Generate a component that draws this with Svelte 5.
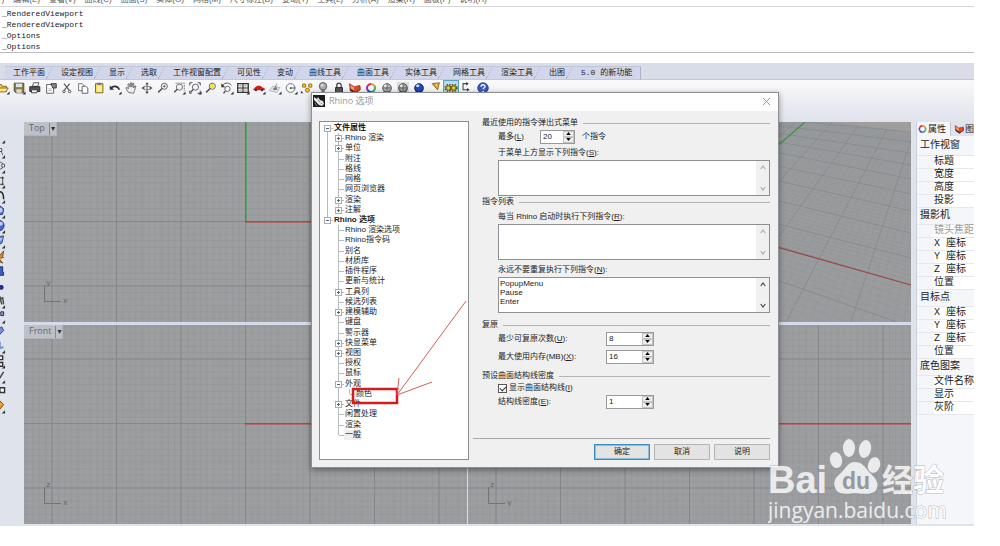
<script lang="ts">
  interface TreeRow {
    text: string
    level: number
    open?: boolean
    closed?: boolean
    last?: boolean
    current?: boolean
  }

  const menus = ['文件(F)', '编辑(E)', '查看(V)', '曲线(C)', '曲面(S)', '实体(O)', '网格(M)', '尺寸标注(D)', '变动(T)', '工具(L)', '分析(A)', '渲染(R)', '面板(P)', '说明(H)']
  const history = ['_RenderedViewport', '_RenderedViewport', '_Options', '_Options']
  const tabs = ['工作平面', '设定视图', '显示', '选取', '工作视窗配置', '可见性', '变动', '曲线工具', '曲面工具', '实体工具', '网格工具', '渲染工具', '出图', '5.0 的新功能']

  const wheel = '<g fill="none" stroke-width="2.4"><path d="M8 3.4a4.6 4.6 0 0 1 4 2.3" stroke="#e8a020"/><path d="M12 5.7a4.6 4.6 0 0 1 0 4.6" stroke="#58b030"/><path d="M12 10.3a4.6 4.6 0 0 1-4 2.3" stroke="#20a0a8"/><path d="M8 12.6a4.6 4.6 0 0 1-4-2.3" stroke="#2848c8"/><path d="M4 10.3a4.6 4.6 0 0 1 0-4.6" stroke="#9030b0"/><path d="M4 5.7a4.6 4.6 0 0 1 4-2.3" stroke="#d82828"/></g>'
  const layers = '<path d="M2 8v3l6 4 6-5V6z" fill="#2d3561"/><path d="M1.500 3l5.500 3.500 6.500-1.500.5 5-5.500 3-6-4z" fill="#e04a20" stroke="#7a1c10" stroke-width=".7"/><path d="M2.500 4.500l4.500 2.800v3.500l-3.500-2z" fill="#f79a6a"/>'
  const lens = '<circle cx="9.500" cy="6" r="3.500" fill="#f4f6f8" stroke="#555"/><path d="M7 8.500L2.500 13" stroke="#555" stroke-width="1.800"/>'
  const more = '<path d="M15.500 12v3.500H12z" fill="#333"/>'
  const ball = (c: string, d: string) =>
    `<circle cx="8" cy="8" r="5" fill="${c}" stroke="${d}"/><ellipse cx="6.500" cy="5.500" rx="2" ry="1.500" fill="#fff" opacity=".8"/><path d="M4 11a5 5 0 0 0 8.500-1" stroke="${d}" fill="none" stroke-width="1.500"/>`

  const tools: { name: string; art: string; on?: boolean }[] = [
    { name: '打开', art: '<path d="M1 4h5l1 2h5v6H2z" fill="#f2cc50" stroke="#806010"/><path d="M4 8h10l-3 4.500H2z" fill="#ffe38a" stroke="#806010"/>' + more },
    { name: '保存', art: '<path d="M2.500 2.500h11v11h-9l-2-2z" fill="#8c7c38" stroke="#4c4630"/><path d="M4.500 3h7v4h-7z" fill="#d8e4f0"/><path d="M5 9.500h6v4H5z" fill="#ddd"/>' + more },
    { name: '打印', art: '<path d="M5 6l1.500-4h6L11 6z" fill="#fff" stroke="#444"/><path d="M2 6.500h11.500V12H2z" fill="#555" stroke="#222"/><path d="M4 10h7l-1 3.500H4z" fill="#eee" stroke="#333"/>' },
    { name: '文件属性', art: '<path d="M3 4h8v10H3z" fill="#fff" stroke="#555"/><path d="M8 3h6v5h-4z" fill="#888" stroke="#333"/><path d="M5 9h4M5 11h4" stroke="#aaa"/>' },
    { name: '剪切', art: '<path d="M4.500 3l6 7.500M11 3l-6 7.500" stroke="#555" stroke-width="1.200"/><circle cx="4.500" cy="12" r="1.400" fill="none" stroke="#444"/><circle cx="11" cy="12" r="1.400" fill="none" stroke="#444"/>' },
    { name: '复制', art: '<path d="M3 3h4l2 2v6H3z" fill="#fff" stroke="#666"/><path d="M7 6h4l2.500 2v6H7z" fill="#fff" stroke="#555"/>' },
    { name: '粘贴', art: '<path d="M4 3h8.500v10.500H4z" fill="#f5de58" stroke="#6d6020"/><path d="M6 2h4.500v2.500H6z" fill="#777"/><path d="M6 6h5v6H6z" fill="#fbf0a0"/>' },
    { name: '复原', art: '<path d="M3 9c2-4 8-4 10 1" fill="none" stroke="#333" stroke-width="1.800"/><path d="M2 5v5h5z" fill="#333"/>' + more },
    { name: '平移', art: '<path d="M5 13l-3-5 1-1 2 2-.5-5.500 1.400-.2L7 7l.3-5h1.400l.3 5 1-4.500 1.300.3L11 8l1.500-2.500 1.200.6L12 11l-1 3z" fill="#eee" stroke="#555" stroke-width=".9"/>' },
    { name: '旋转视图', art: '<ellipse cx="8" cy="8" rx="5" ry="2" fill="none" stroke="#888"/><path d="M8 3v10" stroke="#555"/><path d="M8 1l2 3H6zM8 15l2-3H6zM1.500 8L5 6v4zM14.500 8L11 6v4z" fill="#555"/>' },
    { name: '缩放', art: lens + '<path d="M8 6h3M9.500 4.500v3" stroke="#555"/>' },
    { name: '框选缩放', art: '<path d="M4 2.500h10v9" fill="none" stroke="#666" stroke-dasharray="2 1"/><circle cx="8.500" cy="7" r="3.500" fill="#eef" stroke="#666"/><path d="M6 9.500L2.500 13" stroke="#444" stroke-width="1.600"/>' + more },
    { name: '缩放至最大范围', art: '<circle cx="8.500" cy="7" r="3.500" fill="none" stroke="#555"/><path d="M6 9.500L3 13" stroke="#444" stroke-width="1.500"/><path d="M2 5V2h3M11 2h3v3M14 11v3h-3M2 11v3h2" fill="none" stroke="#333"/>' + more },
    { name: '缩放至选取物件', art: lens + '<circle cx="9.500" cy="6" r="2.500" fill="#ffe030"/>' },
    { name: '复原视图', art: '<circle cx="8.500" cy="9" r="3" fill="none" stroke="#555"/><path d="M6 11.500L4 14" stroke="#444" stroke-width="1.500"/><path d="M3 5c3-4 8-3 10 0" fill="none" stroke="#333"/><path d="M1.500 2.500V7H6z" fill="#333"/>' + more },
    { name: '四个视窗', art: '<path d="M2 3h12v10H2z" fill="#f4f4f4" stroke="#333" stroke-width="1.500"/><path d="M8 3v10M2 8h12" stroke="#333" stroke-width="1.300"/><path d="M4 5.500h2.500M9.500 5.500H12M4 10.500h2.500M9.500 10.500H12" stroke="#888"/>' + more },
    { name: '右视图', art: '<path d="M1.500 9l2-1.500L6 5.500h3.500L12 7.500l2.500.8v2.200h-13z" fill="#cf2020"/><circle cx="4.500" cy="10.500" r="1.300" fill="#333"/><circle cx="11.500" cy="10.500" r="1.300" fill="#333"/>' + more },
    { name: '工作平面', art: '<path d="M1.500 11l4-5 8 1.500L10 13z" fill="#e8eaec" stroke="#aaa"/><path d="M5 9.500l4-3 2 3-3 1z" fill="#777"/><path d="M8 8l2-5" stroke="#5a9c50"/>' + more },
    { name: '物件锁点', art: '<circle cx="7.500" cy="8" r="5" fill="none" stroke="#666"/><path d="M8 8h5" stroke="#444"/><circle cx="7.500" cy="8" r="1" fill="#444"/>' + more },
    { name: '选取', art: '<path d="M3 3.500h3.500V7H3z" fill="#f2c830" stroke="#8a6c10"/><path d="M10 3.500h3.500V7H10z" fill="#f2c830" stroke="#8a6c10"/><circle cx="8.500" cy="10.500" r="2.300" fill="#f2c830" stroke="#8a6c10"/><path d="M1 11v3h3z" fill="#333"/>' + more },
    { name: '隐藏物件', art: '<circle cx="8" cy="6" r="4.300" fill="#a8aaac" stroke="#555"/><path d="M6 10h4v4H6z" fill="#777"/><circle cx="7" cy="5" r="1.500" fill="#ddd"/>' },
    { name: '锁定物件', art: '<path d="M5.500 8V5a2.500 2.500 0 0 1 5 0v3" fill="none" stroke="#444" stroke-width="1.500"/><path d="M4 7.500h8V14H4z" fill="#555" stroke="#222"/>' },
    { name: '图层', art: layers },
    { name: '物件属性', art: wheel },
    { name: '着色', art: ball('#aeb0b2', '#555') + '<path d="M8 3v10M3 8h10" stroke="#555" stroke-width=".8"/>' },
    { name: '着色模式', art: '<path d="M1 1h14v14H1z" fill="#dcdcdc"/>' + ball('#9c9ea0', '#444') + '<path d="M8 3v10M3 8h10" stroke="#555" stroke-width=".8"/>' },
    { name: '渲染', art: ball('#2048b8', '#102468') },
    { name: '聚光灯', art: '<path d="M5 3l8-1-2 8z" fill="#f0b840" stroke="#7a5c20"/><path d="M5 3l6 7" stroke="#a07018"/>' },
    { name: '选项', on: true, art: '<g fill="none" stroke="#5c5210" stroke-width="2.200" stroke-dasharray="1.600 1.300"><circle cx="5" cy="8" r="3.600"/><circle cx="11" cy="8" r="3.600"/></g><circle cx="5" cy="8" r="2.500" fill="#e0cc40" stroke="#6a5c10"/><circle cx="11" cy="8" r="2.500" fill="#e0cc40" stroke="#6a5c10"/>' },
    { name: '尺寸标注', art: '<path d="M8 3H3.500v7H9" fill="none" stroke="#444" stroke-width="1.200"/><path d="M7 1l3 2-3 2zM8 8l3 2-3 2z" fill="#333"/>' + more },
    { name: '说明', art: '<circle cx="8" cy="8" r="6" fill="#3558c4" stroke="#22388c"/><path d="M5.800 6.500c0-3 4.500-2.800 4.500-.3 0 1.600-2.100 1.500-2.100 3.300M8.200 11v1.500" fill="none" stroke="#fff" stroke-width="1.500"/>' },
  ]

  const sideTools = [
    more,
    '<path d="M3 2l8 4 2 6" fill="none" stroke="#666"/><path d="M9 5h3v3H9z" fill="#fff" stroke="#444"/>' + more,
    '<ellipse cx="8" cy="7" rx="6" ry="4" fill="none" stroke="#555"/><path d="M12 5.500h3v3h-3z" fill="#fff" stroke="#555"/>' + more,
    '<path d="M2 4h11v7H2z" fill="none" stroke="#444"/><path d="M12 3h2v2h-2zM12 10h2v2h-2z" fill="#444"/>' + more,
    '<path d="M3 3h7c3 0 4 4 4 8" fill="none" stroke="#222" stroke-width="1.500"/>' + more,
    '<path d="M2 5l8-3 4 3-1 6-8 1z" fill="#5878d8" stroke="#283c80"/><path d="M6 6l6-2 1 4-6 2z" fill="#c4d4fa"/>' + more,
    '<circle cx="9" cy="7" r="5.500" fill="#4468d8" stroke="#203478"/><circle cx="11" cy="5" r="2" fill="#c8d8ff"/>' + more,
    '<path d="M2 4l12-2-2 8-8 2z" fill="#6c8cd8" stroke="#304884"/><path d="M5 5l8-1-1 3-6 1z" fill="#a8c0f0"/>' + more,
    '<path d="M3 8h6l5-6-1 6 1 1-5 1 4 5-7-3z" fill="#e8902c" stroke="#7c4410"/>',
    '<path d="M6 9h3V3h4v6h1v3H6z" fill="#3460c0" stroke="#1c2c60"/>',
    '<circle cx="11.500" cy="9" r="2.500" fill="#2020a0"/><path d="M4 4l7 5-3 4" stroke="#444" fill="none"/>',
    '<path d="M4 3h6l2 8M9 6l4-2 1 7" fill="none" stroke="#444" stroke-width="1.500"/>' + more,
    '<path d="M11 3h3v4h-3z" fill="#8ca4e8" stroke="#223"/><path d="M2 4h7v8" fill="none" stroke="#222" stroke-width="1.500"/>' + more,
    '<path d="M5 8l7-5 2 4-6 6z" fill="#7890e0" stroke="#303c90"/>',
    '<path d="M4 9h10M10 3v8" stroke="#7890d0" stroke-width="2"/>' + more,
    '<path d="M9 2h4v4H9zM9 9h4v4H9z" fill="#eee" stroke="#333" stroke-width="1.500"/>' + more,
    '<path d="M6 8l3 3 5-8" fill="none" stroke="#444" stroke-width="1.500"/>' + more,
    '<path d="M10 4h5v5h-5z" fill="#fff" stroke="#333" stroke-width="1.500"/><path d="M5 6h5" stroke="#333" stroke-width="1.500"/>',
    '<path d="M9 1l5 5-5 6-5-6z" fill="#e8a030" stroke="#704c10"/>' + more,
  ]

  const tree: TreeRow[] = [
    { text: '文件属性', level: 0, open: true },
    { text: 'Rhino 渲染', level: 1, closed: true },
    { text: '单位', level: 1, closed: true },
    { text: '附注', level: 1 },
    { text: '格线', level: 1 },
    { text: '网格', level: 1 },
    { text: '网页浏览器', level: 1 },
    { text: '渲染', level: 1, closed: true },
    { text: '注解', level: 1, closed: true, last: true },
    { text: 'Rhino 选项', level: 0, open: true, last: true },
    { text: 'Rhino 渲染选项', level: 1 },
    { text: 'Rhino指令码', level: 1 },
    { text: '别名', level: 1 },
    { text: '材质库', level: 1 },
    { text: '插件程序', level: 1 },
    { text: '更新与统计', level: 1 },
    { text: '工具列', level: 1, closed: true },
    { text: '候选列表', level: 1 },
    { text: '建模辅助', level: 1, closed: true },
    { text: '键盘', level: 1 },
    { text: '警示器', level: 1 },
    { text: '快显菜单', level: 1, closed: true },
    { text: '视图', level: 1, closed: true },
    { text: '授权', level: 1 },
    { text: '鼠标', level: 1 },
    { text: '外观', level: 1, open: true },
    { text: '颜色', level: 2, last: true },
    { text: '文件', level: 1, closed: true },
    { text: '闲置处理', level: 1 },
    { text: '渲染', level: 1 },
    { text: '一般', level: 1, last: true, current: true },
  ]

  const properties = [
    { title: '工作视窗', rows: ['标题', '宽度', '高度', '投影'] },
    { title: '摄影机', rows: ['镜头焦距', 'X 座标', 'Y 座标', 'Z 座标', '位置'] },
    { title: '目标点', rows: ['X 座标', 'Y 座标', 'Z 座标', '位置'] },
    { title: '底色图案', rows: ['文件名称', '显示', '灰阶'] },
  ]

  // perspective grid: each line as [x1, y1, x2, y2]
  const across = [
    [200, -13, 443, 10], [200, -10, 443, 20], [200, -5, 443, 31], [200, 1, 443, 43], [200, 9, 443, 57],
    [200, 21, 443, 72], [200, 34, 443, 89], [200, 52, 443, 111], [200, 74, 443, 136], [200, 92, 443, 163],
    [200, 120, 443, 205], [200, 158, 443, 262], [200, 205, 443, 330],
  ]
  const along = [
    [337, -8, 270, 50], [366, -2, 300, 72], [392, 1, 270, 172], [420, 5, 318, 200], [443, 18, 379, 212],
    [470, 30, 443, 220],
  ]
  function between(lines: number[][]) {
    return lines.slice(1).flatMap((b, i) =>
      [1, 2, 3, 4, 5].map(n => b.map((v, k) => lines[i][k] + ((v - lines[i][k]) * n) / 6)))
  }
  const fine = [...between(across), ...between(along)]

  let popupCount = $state(20)
  let undoSteps = $state(8)
  let memory = $state(16)
  let density = $state(1)
  let showIso = $state(true)
  let popupList = $state('')
  let startup = $state('')
  let never = $state('PopupMenu\nPause\nEnter')
</script>

{#snippet key(k: string)}
  <span>(<u>{k}</u>)</span>
{/snippet}

{#snippet spinner(id: string, value: number, set: (v: number) => void, wide: boolean)}
  <span class="spinner" class:wide>
    <input {id} type="number" {value} oninput={(e) => set(+e.currentTarget.value)} />
    <span class="steps">
      <button aria-label="增加" onclick={() => set(value + 1)}><svg viewBox="0 0 6 4"><path d="M0 4l3-4 3 4z" /></svg></button>
      <button aria-label="减少" onclick={() => set(value - 1)}><svg viewBox="0 0 6 4"><path d="M0 0l3 4 3-4z" /></svg></button>
    </span>
  </span>
{/snippet}

{#snippet scroller(dim: boolean)}
  <span class="scroller" class:dim>
    <svg viewBox="0 0 8 6"><path d="M1 5l3-4 3 4" /></svg>
    <svg viewBox="0 0 8 6"><path d="M1 1l3 4 3-4" /></svg>
  </span>
{/snippet}

{#snippet viewport(name: string, kind: string, up: string, right: string, ox: number, oy: number)}
  <section class="viewport">
    <svg class="grid" aria-hidden="true">
      <defs>
        <pattern id="minor-{kind}" width="6.450" height="6.450" patternUnits="userSpaceOnUse" x={ox} y={oy}>
          <path d="M.5 0v6.450M0 .5h6.450" stroke="#93959a" stroke-width=".6" fill="none" />
        </pattern>
        <pattern id="major-{kind}" width="64.500" height="64.500" patternUnits="userSpaceOnUse" x={ox} y={oy}>
          <path d="M.5 0v64.500M0 .5h64.500" stroke="#85888b" fill="none" />
        </pattern>
      </defs>
      <rect width="100%" height="100%" fill="url(#minor-{kind})" />
      <rect width="100%" height="100%" fill="url(#major-{kind})" />
      {#if kind === 'top'}
        <rect x={ox} y="0" width="1.500" height={oy} fill="#1fa636" />
      {/if}
      <rect x={kind === 'right' ? 0 : ox} y={oy} width="100%" height="1.500" fill="#c43c3c" />
    </svg>
    <button class="vp-name">{name}<i>▾</i></button>
    <svg class="axes" viewBox="0 0 30 26" aria-hidden="true">
      <path d="M3.500 7v16.500H20" fill="none" stroke="#70757a" />
      <text x="5" y="7">{up}</text>
      <text x="22" y="25">{right}</text>
    </svg>
  </section>
{/snippet}

<div class="page">
  <div class="app">
    <nav class="menus">
      {#each menus as menu}
        <a href="#menu">{menu}</a>
      {/each}
    </nav>

    <div class="history">
      {#each history as line}
        <div>{line}</div>
      {/each}
    </div>
    <input class="prompt" aria-label="指令" />

    <div class="tabs">
      {#each tabs as tab}
        <button>{tab}</button>
      {/each}
    </div>

    <div class="tools">
      {#each tools as tool}
        <button class:on={tool.on} aria-label={tool.name}>
          <svg viewBox="0 0 16 16">{@html tool.art}</svg>
        </button>
      {/each}
    </div>

    <div class="workspace">
      <div class="side">
        {#each sideTools as art, i}
          <button aria-label="工具 {i + 1}"><svg viewBox="0 0 16 16">{@html art}</svg></button>
        {/each}
      </div>

      <div class="viewports">
        {@render viewport('Top', 'top', 'y', 'x', 221, 99)}
        <section class="viewport">
          <svg class="grid" viewBox="0 0 443 200" preserveAspectRatio="xMaxYMin slice" aria-hidden="true">
            <path d="M0 0H443V200H0z" fill="#999b9d" />
            {#each fine as [x1, y1, x2, y2]}
              <line {x1} {y1} {x2} {y2} stroke="#919498" stroke-width=".4" />
            {/each}
            {#each [...across, ...along] as [x1, y1, x2, y2]}
              <line {x1} {y1} {x2} {y2} stroke="#85888b" stroke-width=".8" />
            {/each}
            <path d="M366 0L443 10V0z" fill="#a09e9c" />
            <path d="M270 58L337 0" stroke="#3a9440" stroke-width="1.200" />
            <path d="M270 114L443 163" stroke="#9c4646" stroke-width="1.200" />
          </svg>
        </section>
        {@render viewport('Front', 'front', 'z', 'x', 221, 98)}
        {@render viewport('Right', 'right', 'z', 'y', 221, 98)}
      </div>

      <aside>
        <div class="panel-tabs">
          <button class="active"><svg viewBox="0 0 16 16">{@html wheel}</svg>属性</button>
          <button><svg viewBox="0 0 16 16">{@html layers}</svg>图层</button>
        </div>
        <table>
          <tbody>
            {#each properties as group}
              <tr class="head"><th colspan="2">{group.title}</th></tr>
              {#each group.rows as row}
                <tr><td class="gutter"></td><td class:off={row === '镜头焦距'}>{row}</td></tr>
              {/each}
            {/each}
          </tbody>
        </table>
      </aside>
    </div>
  </div>

  <div class="dialog" role="dialog" aria-labelledby="dialog-title">
    <header>
      <svg class="logo" viewBox="0 0 12 12" aria-hidden="true">
        <path d="M0 0h12v12H0z" fill="#1c1c1c" />
        <path d="M1 2l3 2 1-2 2 3 3 1 1 3-2 2-3-1-3-3-2-2z" fill="#e4e4e4" />
        <path d="M5 5l2 2M8 8l1 1M2 8l2 3" stroke="#888" />
      </svg>
      <h1 id="dialog-title">Rhino 选项</h1>
      <button class="close" aria-label="关闭"><svg viewBox="0 0 8 8"><path d="M0 0l8 8M8 0L0 8" /></svg></button>
    </header>

    <div class="body">
      <ul class="tree">
        {#each tree as row, i}
          <li class:root={row.level === 0}>
            {#if row.level > 0}
              <span class="cell" class:through={i < 9}></span>
            {/if}
            {#if row.level > 1}
              <span class="cell through"></span>
            {/if}
            <span
              class="cell tee"
              class:through={row.level > 0 && !row.last}
              class:half={row.level > 0 && row.last}
              class:below={i === 0}
              class:above={i === 9}
            >
              {#if row.open || row.closed}
                <span class="toggle" class:plus={row.closed}></span>
              {/if}
            </span>
            <span class="name" class:current={row.current}>{row.text}</span>
          </li>
        {/each}
      </ul>

      <div class="pane">
        <h2>最近使用的指令弹出式菜单</h2>
        <div class="row">
          <label class="short" for="popup-count">最多{@render key('L')}</label>
          {@render spinner('popup-count', popupCount, v => popupCount = v, false)}
          <span>个指令</span>
        </div>
        <label class="above-box" for="popup-list">于菜单上方显示下列指令{@render key('S')}:</label>
        <div class="box"><textarea id="popup-list" bind:value={popupList}></textarea>{@render scroller(true)}</div>

        <h2>指令列表</h2>
        <label class="above-box" for="startup">每当 Rhino 启动时执行下列指令{@render key('R')}:</label>
        <div class="box"><textarea id="startup" bind:value={startup}></textarea>{@render scroller(true)}</div>
        <label class="above-box second" for="never">永远不要重复执行下列指令{@render key('N')}:</label>
        <div class="box"><textarea id="never" bind:value={never}></textarea>{@render scroller(false)}</div>

        <h2 class="spaced">复原</h2>
        <div class="row">
          <label for="undo">最少可复原次数{@render key('U')}:</label>
          {@render spinner('undo', undoSteps, v => undoSteps = v, true)}
        </div>
        <div class="row next">
          <label for="memory">最大使用内存(MB){@render key('X')}:</label>
          {@render spinner('memory', memory, v => memory = v, true)}
        </div>

        <h2 class="spaced">预设曲面结构线密度</h2>
        <label class="check"><input type="checkbox" bind:checked={showIso} />显示曲面结构线{@render key('I')}</label>
        <div class="row">
          <label for="density">结构线密度{@render key('E')}:</label>
          {@render spinner('density', density, v => density = v, true)}
        </div>

        <footer>
          <button class="default">确定</button>
          <button>取消</button>
          <button>说明</button>
        </footer>
      </div>
    </div>
  </div>

  <svg class="callout" viewBox="0 0 116 108" aria-hidden="true">
    <path d="M2 89h44v14H2z" fill="none" stroke="#d41c1c" stroke-width="2.500" />
    <path d="M115 1L46 95L48 78M46 95L81 82" fill="none" stroke="#d06060" />
  </svg>

  <svg class="watermark" viewBox="0 0 180 90" aria-hidden="true">
    <g class="ink">
      <text class="bai" x="0" y="55">Bai</text>
      <ellipse cx="68" cy="22" rx="6" ry="8" transform="rotate(-12 68 22)" />
      <ellipse cx="81" cy="10" rx="6" ry="9" />
      <ellipse cx="97" cy="11" rx="6" ry="9" transform="rotate(12 97 11)" />
      <ellipse cx="106" cy="27" rx="6" ry="8" transform="rotate(18 106 27)" />
      <path d="M87 24c-7 0-9 6-14 11-5 4-8 8-6 14 2 8 10 7 20 6 10 1 20 2 22-5 2-7-3-11-8-16-4-5-7-10-14-10z" />
      <text class="jy" x="114" y="53">经验</text>
      <text class="url" x="0" y="80">jingyan.baidu.com</text>
    </g>
    <text class="du" x="74" y="51">du</text>
  </svg>
</div>

<style>
  :global(body) {
    background: #fff;
  }

  .page {
    position: relative;
    overflow: hidden;
    padding-right: 26px;
    font: 8px/12px "Liberation Sans", "Noto Sans CJK SC", sans-serif;
    color: #222;
  }

  .page * {
    box-sizing: border-box;
  }

  button,
  input,
  textarea {
    font: inherit;
    color: inherit;
    margin: 0;
    padding: 0;
    border: 0;
    background: none;
  }

  svg {
    display: block;
  }

  .app {
    background: #dfe3ec;
  }

  .menus {
    display: flex;
    align-items: flex-end;
    gap: 9px;
    height: 7px;
    margin-left: -22px;
    overflow: hidden;
    background: #fff;
    border-bottom: 1px solid #d4d8dd;
  }

  .menus a {
    color: #555;
    text-decoration: none;
    white-space: nowrap;
  }

  .history {
    padding: 1px 2px 0;
    background: #fff;
    border-bottom: 1px solid #b9bcc0;
    font: 8px/11px "Liberation Mono", monospace;
  }

  .prompt {
    display: block;
    width: 100%;
    height: 10px;
    background: #fff;
  }

  .tabs {
    display: flex;
    height: 17px;
    padding: 3px 0 0 5px;
    background: #d9dde8;
    border-bottom: 1px solid #c3c8d6;
  }

  .tabs button {
    padding: 0 8px;
    white-space: nowrap;
    font-family: "Liberation Mono", "Noto Sans CJK SC", monospace;
    background:
      linear-gradient(118deg, transparent 49%, #abb2c8 49%, #abb2c8 53%, transparent 53%) right / 8px 100% no-repeat,
      #d1d6ea;
    border-top: 1px solid #c0c6d8;
  }

  .tabs button:last-child {
    background: #d1d6ea;
    border-right: 1px solid #abb2c8;
  }

  .tools {
    display: flex;
    height: 42px;
    margin-left: -5px;
    background: linear-gradient(#fafafb, #e9ebf1 60%, #dfe3ec);
  }

  .tools button {
    width: 16px;
    height: 16px;
  }

  .tools svg {
    width: 14px;
    height: 16px;
    margin: auto;
  }

  .tools .on {
    background: #b9dcec;
    outline: 1px solid #58a4c4;
    outline-offset: -1px;
  }

  .workspace {
    display: grid;
    grid-template-columns: 24px 1fr 63px;
    padding-bottom: 2px;
  }

  .side {
    display: flex;
    flex-direction: column;
    align-items: flex-start;
    padding-top: 7px;
    overflow: hidden;
  }

  .side button {
    height: 15px;
    margin-left: -10px;
  }

  .side svg {
    width: 16px;
    height: 15px;
  }

  .viewports {
    display: grid;
    grid-template: 200px 199px / 1fr 1fr;
    gap: 3px 1px;
    background: #d5dbe8;
  }

  .viewport {
    position: relative;
    overflow: hidden;
    background: #9c9e9f;
  }

  .grid {
    position: absolute;
    width: 100%;
    height: 100%;
  }

  .vp-name {
    position: relative;
    display: block;
    padding-left: 5px;
    background: #bdc1c7;
    border: 1px solid #b0b5bc;
    border-width: 0 1px 1px 0;
    color: #62676c;
    font: 9px/12px "Open Sans", sans-serif;
  }

  .vp-name i {
    display: inline-block;
    width: 7px;
    margin-left: 4px;
    border-left: 1px solid #858a90;
    color: #333;
    font: 8px/12px "DejaVu Sans", sans-serif;
  }

  .axes {
    position: absolute;
    left: 17px;
    bottom: 18px;
    width: 30px;
    height: 26px;
  }

  .axes text {
    font: 8px "Liberation Mono", monospace;
    fill: #60656a;
  }

  aside {
    margin-left: 5px;
    overflow: hidden;
    background: #f5f6fa;
    border-left: 1px solid #c9cedb;
  }

  .panel-tabs {
    display: flex;
    gap: 3px;
    height: 14px;
    margin-bottom: 2px;
    background: #dfe3ec;
    overflow: hidden;
  }

  .panel-tabs button {
    display: flex;
    flex: none;
    align-items: center;
    padding-right: 4px;
    font-size: 9px;
  }

  .panel-tabs .active {
    background: #f5f6fa;
    border-right: 1px solid #c3c8d6;
  }

  .panel-tabs svg {
    width: 11px;
    height: 12px;
  }

  table {
    width: 100%;
    border-collapse: collapse;
    font-family: "Liberation Mono", "Noto Sans CJK SC", monospace;
    font-size: 10px;
  }

  td,
  th {
    height: 13px;
    padding: 0;
    background: #fff;
    border-bottom: 1px solid #e6e8ee;
    font-weight: normal;
    text-align: left;
    white-space: nowrap;
  }

  th {
    height: 17px;
    padding-left: 3px;
    background: #f5f6fa;
  }

  td.gutter {
    width: 18px;
    background: #f5f6fa;
  }

  .off {
    color: #999;
  }

  .dialog {
    position: absolute;
    left: 311px;
    top: 92px;
    width: 468px;
    background: #f0f0f0;
    border: 1px solid #8d9094;
    box-shadow: 0 2px 6px #0006;
  }

  header {
    display: flex;
    align-items: center;
    gap: 4px;
    height: 18px;
    padding: 0 8px 2px 1px;
    background: #fff;
  }

  .logo {
    width: 12px;
    height: 12px;
  }

  h1 {
    margin: 0;
    color: #999;
    font: 9px/12px "Open Sans", "Noto Sans CJK SC", sans-serif;
  }

  .close {
    margin-left: auto;
  }

  .close svg {
    width: 7px;
    height: 7px;
    stroke: #888;
  }

  .body {
    display: flex;
    gap: 4px;
    padding: 6px 8px 7px 7px;
  }

  .tree {
    display: grid;
    grid-auto-rows: 1fr;
    flex: none;
    width: 150px;
    margin: 4px 0 0;
    padding: 1px 0 19px 2px;
    list-style: none;
    background: #fff;
    border: 1px solid #8a8d92;
    line-height: 10px;
  }

  .tree li {
    display: flex;
    align-items: stretch;
    min-height: 0;
  }

  .root {
    font-weight: bold;
  }

  .cell {
    position: relative;
    width: 11px;
  }

  .through::before,
  .half::before,
  .below::before,
  .above::before {
    content: '';
    position: absolute;
    left: 5px;
    top: 0;
    bottom: 0;
    width: 1px;
    background: #b8babd;
  }

  .half::before,
  .above::before {
    bottom: 50%;
  }

  .below::before {
    top: 50%;
  }

  .tee::after {
    content: '';
    position: absolute;
    left: 6px;
    top: 5px;
    width: 5px;
    height: 1px;
    background: #b8babd;
  }

  .toggle {
    position: absolute;
    z-index: 1;
    left: 2px;
    top: 2px;
    width: 7px;
    height: 7px;
    border: 1px solid #a9acb2;
    background: linear-gradient(#567, #567) center / 3px 1px no-repeat, #fff;
  }

  .toggle.plus {
    background:
      linear-gradient(#567, #567) center / 3px 1px no-repeat,
      linear-gradient(#567, #567) center / 1px 3px no-repeat,
      #fff;
  }

  .name {
    padding: 0 1px;
    white-space: nowrap;
  }

  .current {
    background: #eee;
  }

  .pane {
    display: flex;
    flex-direction: column;
    flex: 1;
  }

  h2 {
    display: flex;
    align-items: center;
    gap: 5px;
    margin: 0;
    padding-left: 9px;
    font-size: 8px;
    font-weight: normal;
  }

  h2::after {
    content: '';
    flex: 1;
    height: 1px;
    background: #b4b4b4;
  }

  .spaced {
    margin-top: 6px;
  }

  .row {
    display: flex;
    align-items: center;
    gap: 7px;
    height: 15px;
    margin-left: 25px;
  }

  .row label {
    width: 101px;
  }

  .row .short {
    width: 35px;
  }

  .next {
    margin-top: 3px;
  }

  .above-box {
    margin: 3px 0 1px 25px;
  }

  .second {
    margin-top: 4px;
  }

  .box {
    display: flex;
    height: 36px;
    margin-left: 25px;
    background: #fff;
    border: 1px solid #8c8f93;
  }

  .box textarea {
    flex: 1;
    min-width: 0;
    padding: 1px;
    resize: none;
    overflow: hidden;
    line-height: 9px;
    outline: none;
  }

  .scroller {
    display: flex;
    flex-direction: column;
    justify-content: space-between;
    align-items: center;
    width: 13px;
    padding: 4px 0;
    background: #f0f0f0;
  }

  .scroller svg {
    width: 6px;
    height: 5px;
    fill: none;
    stroke: #444;
    stroke-width: 1.5;
  }

  .scroller.dim svg {
    stroke: #aaa;
  }

  .spinner {
    display: flex;
    width: 35px;
    height: 14px;
    background: #fff;
    border: 1px solid #999;
  }

  .spinner.wide {
    width: 48px;
  }

  .spinner input {
    flex: 1;
    min-width: 0;
    padding-left: 2px;
    appearance: textfield;
    outline: none;
  }

  .spinner input::-webkit-inner-spin-button {
    appearance: none;
  }

  .steps {
    display: flex;
    flex-direction: column;
    width: 11px;
  }

  .steps button {
    display: flex;
    flex: 1;
    align-items: center;
    justify-content: center;
    background: #eee;
    border: 1px solid #c4c4c4;
  }

  .steps svg {
    width: 5px;
    height: 3px;
  }

  .check {
    display: flex;
    align-items: center;
    margin-left: 25px;
  }

  .check input {
    appearance: none;
    width: 9px;
    height: 9px;
    margin-right: 2px;
    border: 1px solid #555;
    background: #fff;
  }

  .check input:checked::before {
    content: '';
    display: block;
    width: 5px;
    height: 3px;
    margin: 1px;
    border: solid #333;
    border-width: 0 0 1px 1px;
    transform: rotate(-45deg);
  }

  footer {
    display: flex;
    justify-content: flex-end;
    gap: 4px;
    margin-top: 29px;
    padding-top: 5px;
    border-top: 1px solid #a8a8a8;
  }

  footer button {
    width: 56px;
    height: 16px;
    background: #e3e3e3;
    border: 1px solid #b4b4b4;
  }

  footer .default {
    border: 1px solid #3c8cbc;
    outline: 1px solid #8cbcd8;
    outline-offset: -2px;
  }

  .callout {
    position: absolute;
    left: 351px;
    top: 300px;
    width: 116px;
    height: 108px;
  }

  .watermark {
    position: absolute;
    left: 768px;
    top: 438px;
    width: 180px;
    height: 90px;
  }

  .ink {
    fill: #fff;
    stroke: #a4a8ac;
    stroke-width: 1;
    paint-order: stroke;
    opacity: 0.8;
  }

  .bai {
    font: bold 38px "Liberation Sans", sans-serif;
  }

  .jy {
    font: bold 31px "Noto Sans CJK SC", sans-serif;
  }

  .url {
    font: 21px "Open Sans", sans-serif;
  }

  .du {
    font: bold 23px "Liberation Sans", sans-serif;
    fill: #96989b;
  }
</style>
